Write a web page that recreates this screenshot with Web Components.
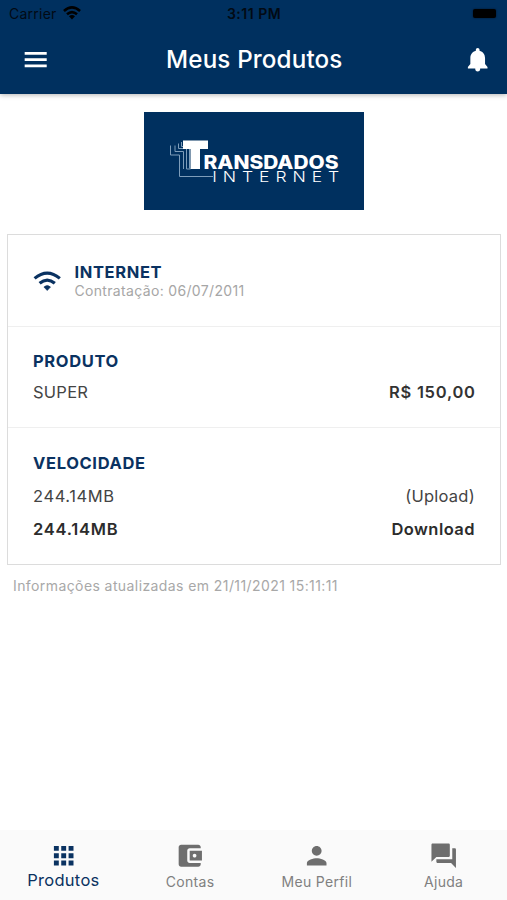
<!DOCTYPE html>
<html lang="pt-BR">
<head>
<meta charset="utf-8">
<title>Meus Produtos</title>
<style>
html,body{margin:0;height:100%;background:#fff}
body{font-family:Inter,"Liberation Sans",sans-serif;overflow:hidden}
</style>
</head>
<body>
<products-app></products-app>
<script>
const define = (name, html) => customElements.define(name, class extends HTMLElement {
  constructor() {
    super();
    this.attachShadow({ mode: 'open' }).innerHTML = html;
  }
});

const ICONS = {
  menu: '<path d="M3 18.200h18v-2.200H3v2.200zm0-5.100h18v-2.200H3v2.200zm0-7.300v2.200h18V5.800H3z"/>',
  bell: '<path d="M12 21.600c1.100 0 1.900-.7 1.900-1.600h-3.800c0 .9.800 1.600 1.900 1.600zm6-6v-4.800c0-3.07-1.640-5.440-4.500-6.120V4c0-.83-.67-1.500-1.500-1.500s-1.500.67-1.500 1.500v.68C7.630 5.360 6 7.720 6 10.800v4.800l-2 2.300v1.200h6v1h4v-1h6v-1.200z"/>',
  grid: '<path d="M4 8h4V4H4v4zm6 12h4v-4h-4v4zm-6 0h4v-4H4v4zm0-6h4v-4H4v4zm6 0h4v-4h-4v4zm6-10v4h4V4h-4zm-6 4h4V4h-4v4zm6 6h4v-4h-4v4zm0 6h4v-4h-4v4z"/>',
  wallet: '<path d="M21 18v1c0 1.1-.9 2-2 2H5c-1.11 0-2-.9-2-2V5c0-1.1.89-2 2-2h14c1.1 0 2 .9 2 2v1h-9c-1.11 0-2 .9-2 2v8c0 1.1.89 2 2 2h9zm-9-2h10V8H12v8zm4-2.5c-.83 0-1.5-.67-1.5-1.5s.67-1.5 1.5-1.5 1.5.67 1.5 1.5-.67 1.5-1.5 1.5z"/>',
  person: '<path d="M12 12c2.21 0 4-1.79 4-4s-1.79-4-4-4-4 1.79-4 4 1.79 4 4 4zm0 2c-2.67 0-8 1.34-8 4v2h16v-2c0-2.66-5.33-4-8-4z"/>',
  forum: '<path d="M21 6h-2v9H6v2c0 .55.45 1 1 1h11l4 4V7c0-.55-.45-1-1-1zm-4 6V3c0-.55-.45-1-1-1H3c-.55 0-1 .45-1 1v14l4-4h10c.55 0 1-.45 1-1z"/>',
  wifi: '<g fill="none" stroke="currentColor" stroke-width="2.6"><path d="M1.300 9.300Q11.600 .6 21.900 9.300"/><path d="M5.400 13.300Q11.600 8 17.800 13.300"/></g><path d="M11.600 19.200 8.900 16.300q2.700-2.300 5.400 0z" stroke="currentColor" stroke-width=".5" stroke-linejoin="round"/>'
};

customElements.define('app-icon', class extends HTMLElement {
  constructor() {
    super();
    this.attachShadow({ mode: 'open' }).innerHTML =
      `<style>:host{display:block;width:29.4px;height:29.4px;flex:none}svg{display:block;width:100%;height:100%;fill:currentColor}</style>
       <svg viewBox="0 0 24 24">${ICONS[this.getAttribute('name')]}</svg>`;
  }
});

define('status-bar', `<style>
:host{display:grid;grid-template-columns:1fr auto 1fr;align-items:center;height:28px;padding:0 10px 0 9px;color:#020a14;font-size:14px;line-height:28px}
.l{display:flex;align-items:center;gap:6px;letter-spacing:.25px}
.t{font-weight:600;letter-spacing:.5px;padding-left:2px}
.wifi{width:18px;height:13.500px;margin-top:-2px}
.bat{justify-self:end;width:23px;height:9.5px;border-radius:2px;background:#000;margin:-1px 1px 0 0;box-shadow:0 0 2px #001328}
</style>
<span class="l"><span>Carrier</span><svg class="wifi" viewBox="0 0 19 14"><g fill="none" stroke="#000" stroke-width="2.7"><path d="M1 5.2Q9.5-2.4 18 5.2"/><path d="M4.2 8.6Q9.5 4 14.8 8.6"/></g><path d="M9.5 14 6.3 10.7q3.2-2.5 6.4 0z"/></svg></span>
<span class="t">3:11 PM</span><span class="bat"></span>`);

define('app-header', `<style>
:host{display:block;height:94px;background:#00305f;color:#fff;box-shadow:0 1px 5px rgba(0,0,0,.3);position:relative}
.bar{display:grid;grid-template-columns:1fr auto 1fr;align-items:center;height:64px;padding:0 15px 0 20.600px}
h1{margin:0 2px 0 0;font-size:24.2px;line-height:30px;font-weight:500;letter-spacing:.15px;white-space:nowrap;padding:0 2px 0 0}
.r{justify-self:end}
</style><status-bar></status-bar>
<div class="bar"><app-icon name="menu"></app-icon><h1>Meus Produtos</h1><app-icon class="r" name="bell"></app-icon></div>`);

define('brand-logo', `<style>
:host{display:block;width:220px;height:98px;margin:18px auto 0;background:#00305f}
svg{display:block}
text{font-family:Inter,"Liberation Sans",sans-serif;fill:#fff}
</style>
<svg width="220" height="98" viewBox="144 112 220 98">
<g fill="none" stroke="#7e9dba" stroke-width="1"><path d="M170.500 145.500v9.500h9v21.500h33.500"/><path d="M175 145.500v6h8.500v17.500"/><path d="M178.500 143.500v5h8v20.500h4"/><path d="M181.500 142v4.500h8v22"/></g>
<path d="M183 140.500h25v8.500h-8v20h-9.500v-20h-7.500z" fill="#fff"/>
<text x="203.500" y="168.500" font-size="18.600" font-weight="800" textLength="135" lengthAdjust="spacingAndGlyphs">RANSDADOS</text>
<text transform="translate(212.300 181.500) scale(1.25 1)" font-size="14" font-weight="300" textLength="101.500">INTERNET</text>
</svg>`);

define('info-section', `<style>
:host{display:block;box-sizing:border-box;padding:0 24.500px 0 25px;border-bottom:1px solid #efefef}
:host(:last-of-type){border-bottom:0}
</style><slot></slot>`);

define('section-title', `<style>:host{display:block;font-size:16.500px;line-height:22px;font-weight:700;letter-spacing:.65px;color:#0a3261;white-space:nowrap}</style><slot></slot>`);

define('data-row', `<style>
:host{display:flex;justify-content:space-between;font-size:16.500px;line-height:22px;letter-spacing:.25px;color:#444;white-space:nowrap}
:host([strong]){font-weight:600;color:#2c2c2c}
</style><slot name="label"></slot><slot name="value"></slot>`);

define('product-card', `<style>
:host{display:flex;flex-direction:column;box-sizing:border-box;height:331px;margin:24px 6.500px 0 7px;border:1.500px solid #dcdcdc}
.a{height:92px}.b{height:101px}.c{flex:1}
.head{display:flex;align-items:center;gap:12px;padding-top:25.500px}
.head app-icon{color:#0a3261;margin-top:4px}
.sub{font-size:14px;line-height:17px;color:#a6a6a6;letter-spacing:.34px;white-space:nowrap;margin-top:-.5px}
.b section-title{margin-top:23px}.b data-row{margin-top:9px}
.c section-title{margin-top:24px}.c .u{margin-top:11px}.c .d{margin-top:11px}
.semi{font-weight:600;color:#333;letter-spacing:.75px;margin-right:-.75px}
.u [slot=label]{letter-spacing:.6px}
.d [slot=label]{letter-spacing:.75px}
.d [slot=value]{letter-spacing:.45px}
</style>
<info-section class="a"><div class="head"><app-icon name="wifi"></app-icon><div><section-title>INTERNET</section-title><div class="sub">Contratação: 06/07/2011</div></div></div></info-section>
<info-section class="b"><section-title>PRODUTO</section-title><data-row><span slot="label">SUPER</span><span slot="value" class="semi">R$ 150,00</span></data-row></info-section>
<info-section class="c"><section-title>VELOCIDADE</section-title><data-row class="u"><span slot="label">244.14MB</span><span slot="value">(Upload)</span></data-row><data-row class="d" strong><span slot="label">244.14MB</span><span slot="value">Download</span></data-row></info-section>`);

define('nav-item', `<style>
:host{display:flex;flex-direction:column;align-items:center;flex:1;color:#808080;font-size:14px;letter-spacing:.3px;padding-top:11px}
:host([active]){color:#0a3261;font-size:16.500px}
.t{line-height:22px;white-space:nowrap;margin-top:.6px}
:host([active]) .t{margin-top:-1px}
</style><slot name="icon"></slot><span class="t"><slot></slot></span>`);

define('bottom-nav', `<style>:host{display:flex;height:70px;background:#fafafa}app-icon{color:#6e6e6e}[active] app-icon{color:#0a3261}</style>
<nav-item active><app-icon slot="icon" name="grid"></app-icon>Produtos</nav-item>
<nav-item><app-icon slot="icon" name="wallet"></app-icon>Contas</nav-item>
<nav-item><app-icon slot="icon" name="person"></app-icon>Meu Perfil</nav-item>
<nav-item><app-icon slot="icon" name="forum"></app-icon>Ajuda</nav-item>`);

define('products-app', `<style>
:host{display:flex;flex-direction:column;height:900px;background:#fff}
main{flex:1}
.upd{margin:12px 0 0 13px;font-size:14px;line-height:18px;letter-spacing:.41px;color:#a8a8a8;white-space:nowrap}
</style><app-header></app-header><main><brand-logo></brand-logo><product-card></product-card><div class="upd">Informações atualizadas em 21/11/2021 15:11:11</div></main><bottom-nav></bottom-nav>`);
</script>
</body>
</html>
